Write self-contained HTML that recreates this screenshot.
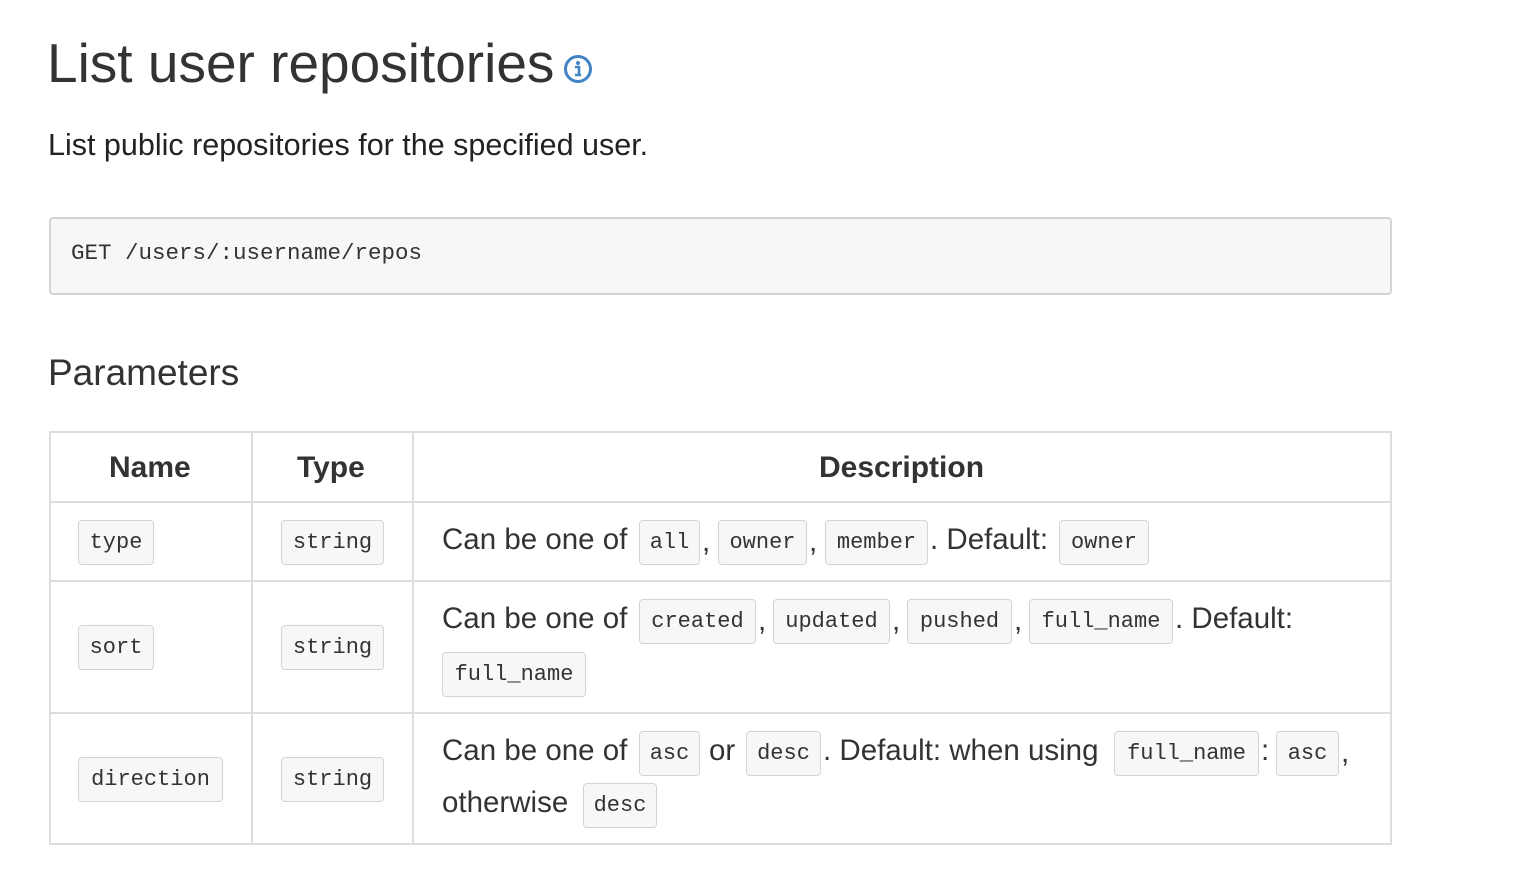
<!DOCTYPE html>
<html><head><meta charset="utf-8"><style>
body{margin:0;width:1536px;height:889px;background:#fff;position:relative;font-family:"Liberation Sans",sans-serif;color:#333;overflow:hidden}
.a{position:absolute;white-space:nowrap}
.c{position:absolute;height:45px;background:#f7f7f7;border:1px solid #d4d4d4;border-radius:4px;box-sizing:border-box;font-family:"Liberation Mono",monospace;font-size:22px;line-height:43px;text-align:center;color:#333}
.t{position:absolute;font-size:29.5px;line-height:32px;white-space:nowrap;color:#333}
.h{position:absolute;font-size:30px;font-weight:bold;top:451px;color:#333}
.vl{position:absolute;width:2px;background:#ddd;top:431px;height:414px}
.hl{position:absolute;height:2px;background:#ddd;left:49px;width:1343px}
</style></head><body>
<div class="a" style="left:47px;top:31px;font-size:55px;color:#333">List user repositories</div>
<svg class="a" style="left:563px;top:54px" width="30" height="30" viewBox="0 0 30 30"><circle cx="15" cy="15" r="12.5" fill="none" stroke="#4183c4" stroke-width="3"/><circle cx="15" cy="9" r="2" fill="#4183c4"/><path d="M12 13h4v8h2M12 21h6" stroke="#4183c4" stroke-width="2.6" fill="none"/></svg>
<div class="a" style="left:48px;top:128px;font-size:30.5px;color:#222">List public repositories for the specified user.</div>
<div class="a" style="left:49px;top:217px;width:1343px;height:78px;box-sizing:border-box;background:#f7f7f7;border:2px solid #d4d4d4;border-radius:4px"></div>
<div class="a" style="left:71px;top:240px;font-family:'Liberation Mono',monospace;font-size:22.5px;color:#333">GET /users/:username/repos</div>
<div class="a" style="left:48px;top:352px;font-size:37px;color:#333">Parameters</div>

<div class="a" style="left:49px;top:431px;width:1343px;height:414px;border:2px solid #ddd;box-sizing:border-box"></div>
<div class="vl" style="left:251px"></div><div class="vl" style="left:412px"></div>
<div class="hl" style="top:501px"></div><div class="hl" style="top:580px"></div><div class="hl" style="top:712px"></div>
<div class="h" style="left:109px">Name</div><div class="h" style="left:297px">Type</div><div class="h" style="left:819px">Description</div>

<div class="c" style="left:78px;top:520px;width:76px">type</div>
<div class="c" style="left:281px;top:520px;width:103px">string</div>
<div class="t" style="left:442px;top:524px">Can be one of</div>
<div class="c" style="left:639px;top:520px;width:61px">all</div><div class="t" style="left:702px;top:526px">,</div>
<div class="c" style="left:718px;top:520px;width:89px">owner</div><div class="t" style="left:809px;top:526px">,</div>
<div class="c" style="left:825px;top:520px;width:103px">member</div>
<div class="t" style="left:930px;top:524px">. Default:</div>
<div class="c" style="left:1059px;top:520px;width:90px">owner</div>

<div class="c" style="left:78px;top:625px;width:76px">sort</div>
<div class="c" style="left:281px;top:625px;width:103px">string</div>
<div class="t" style="left:442px;top:603px">Can be one of</div>
<div class="c" style="left:639px;top:599px;width:117px">created</div><div class="t" style="left:758px;top:605px">,</div>
<div class="c" style="left:773px;top:599px;width:117px">updated</div><div class="t" style="left:892px;top:605px">,</div>
<div class="c" style="left:907px;top:599px;width:105px">pushed</div><div class="t" style="left:1014px;top:605px">,</div>
<div class="c" style="left:1029px;top:599px;width:144px">full_name</div>
<div class="t" style="left:1175px;top:603px">. Default:</div>
<div class="c" style="left:442px;top:652px;width:144px">full_name</div>

<div class="c" style="left:78px;top:757px;width:145px">direction</div>
<div class="c" style="left:281px;top:757px;width:103px">string</div>
<div class="t" style="left:442px;top:735px">Can be one of</div>
<div class="c" style="left:639px;top:731px;width:61px">asc</div>
<div class="t" style="left:709px;top:735px">or</div>
<div class="c" style="left:746px;top:731px;width:75px">desc</div>
<div class="t" style="left:823px;top:735px">. Default: when using</div>
<div class="c" style="left:1114px;top:731px;width:145px">full_name</div><div class="t" style="left:1261px;top:735px">:</div>
<div class="c" style="left:1276px;top:731px;width:63px">asc</div><div class="t" style="left:1341px;top:737px">,</div>
<div class="t" style="left:442px;top:787px">otherwise</div>
<div class="c" style="left:583px;top:783px;width:74px">desc</div>
</body></html>
